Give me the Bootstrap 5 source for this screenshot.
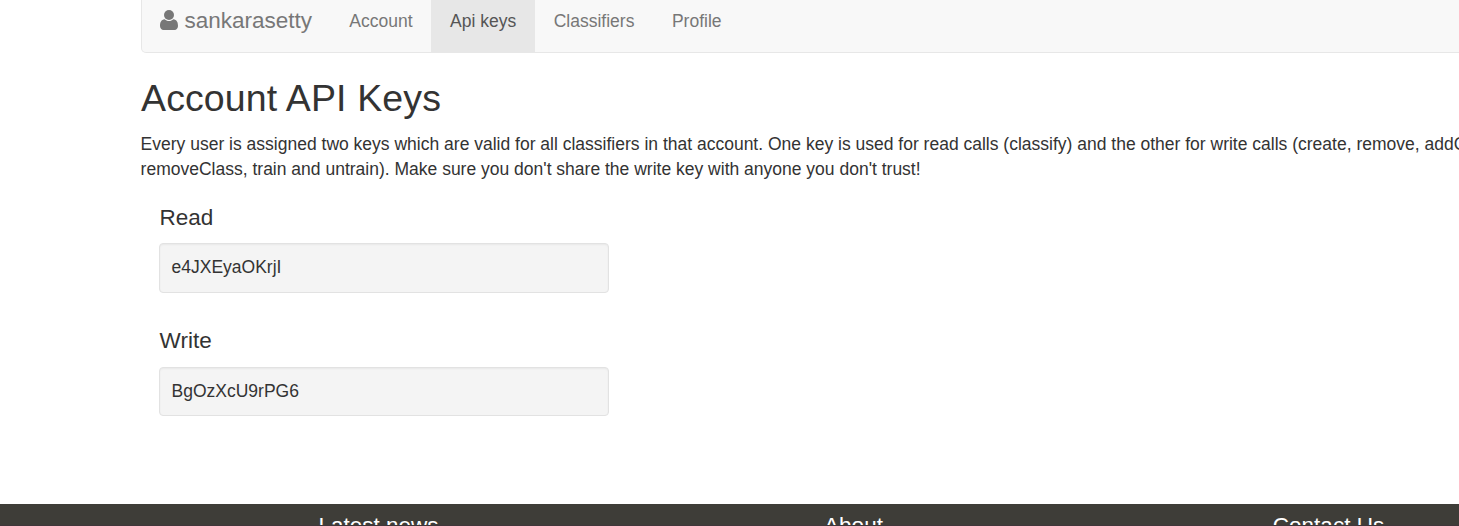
<!DOCTYPE html>
<html lang="en">
<head>
<meta charset="utf-8">
<title>Account API Keys</title>
<link href="https://cdn.jsdelivr.net/npm/bootstrap@5.3.0/dist/css/bootstrap.min.css" rel="stylesheet">
<style>
html, body { height: 526px; overflow: hidden; }
body { font-family: "Liberation Sans", Arial, sans-serif; font-size: 17.5px; line-height: 25px; color: #333; background: #fff; }
.page { height: 526px; overflow: hidden; }
.wrap { width: 1425px; margin-left: 141px; }
.account-nav { height: 53px; background: #f8f8f8; border: 1px solid #e7e7e7; border-top: 0; border-radius: 0 0 5px 5px; padding: 0; }
.account-nav .navbar-brand { font-size: 22.5px; color: #777; padding: 8px 18.5px 0 18px; margin: 0; line-height: 25px; height: 52px; }
.account-nav .navbar-brand svg { margin: 2px 6.5px 0 0; }
.account-nav .nav-link { color: #777; height: 52px; padding: 9px 18.75px 0; line-height: 25px; }
.account-nav .nav-link.active { color: #555; background: #e7e7e7; }
h1 { font-size: 37.5px; line-height: 41px; font-weight: 400; margin: 25px 0 13px; letter-spacing: .12px; }
h2 { font-size: 22.5px; line-height: 25px; font-weight: 400; margin: 0; }
.intro { margin-left: -.4px; }
.keys { padding-left: 18px; }
.key h2 { margin: -1px 0 13px .6px; }
.key + .key { margin-top: 36px; }
.key + .key h2 { margin-bottom: 14px; }
.key-box { width: 450px; height: 50px; background: #f4f4f4; border: 1px solid #e2e2e2; border-radius: 4px; box-shadow: inset 0 1px 2px rgba(0,0,0,.05); padding: 11px 11.5px; }
.key + .key .key-box { height: 49px; }
.site-footer { background: #3e3d38; color: #fff; height: 22px; overflow: hidden; border-bottom: 1px solid #40363a; }
.site-footer h2 { padding-top: 9px; }
</style>
</head>
<body>
<div class="page d-flex flex-column">
  <div class="wrap flex-shrink-0">
    <nav class="navbar account-nav align-items-start justify-content-start flex-nowrap">
      <a class="navbar-brand d-flex" href="#">
        <svg class="flex-shrink-0" width="18" height="20" viewBox="0 0 18 20" fill="#777" aria-hidden="true"><path d="M13.3 9.2C16.8 9.5 18 12.3 18 16.1C18 18.5 16.5 20 14.5 20H3.5C1.5 20 0 18.5 0 16.1C0 12.3 1.2 9.5 4.7 9.2C5.8 10.3 7.3 11 9 11C10.7 11 12.2 10.3 13.3 9.2Z"/><circle cx="9" cy="5" r="5"/></svg>sankarasetty</a>
      <ul class="nav flex-nowrap">
        <li class="nav-item"><a class="nav-link" href="#">Account</a></li>
        <li class="nav-item"><a class="nav-link active" href="#">Api keys</a></li>
        <li class="nav-item"><a class="nav-link" href="#">Classifiers</a></li>
        <li class="nav-item"><a class="nav-link" href="#">Profile</a></li>
      </ul>
    </nav>
    <main>
      <h1>Account API Keys</h1>
      <p class="intro mb-4">Every user is assigned two keys which are valid for all classifiers in that account. One key is used for read calls (classify) and the other for write calls (create, remove, addClass,<br>removeClass, train and untrain). Make sure you don't share the write key with anyone you don't trust!</p>
      <div class="keys">
        <section class="key"><h2>Read</h2><div class="key-box">e4JXEyaOKrjI</div></section>
        <section class="key"><h2>Write</h2><div class="key-box">BgOzXcU9rPG6</div></section>
      </div>
    </main>
  </div>
  <footer class="site-footer mt-auto flex-shrink-0">
    <div class="wrap"><div class="row g-0 text-center">
      <div class="col-4"><h2>Latest news</h2></div>
      <div class="col-4"><h2>About</h2></div>
      <div class="col-4"><h2>Contact Us</h2></div>
    </div></div>
  </footer>
</div>
<script src="https://cdn.jsdelivr.net/npm/bootstrap@5.3.0/dist/js/bootstrap.bundle.min.js"></script>
</body>
</html>
